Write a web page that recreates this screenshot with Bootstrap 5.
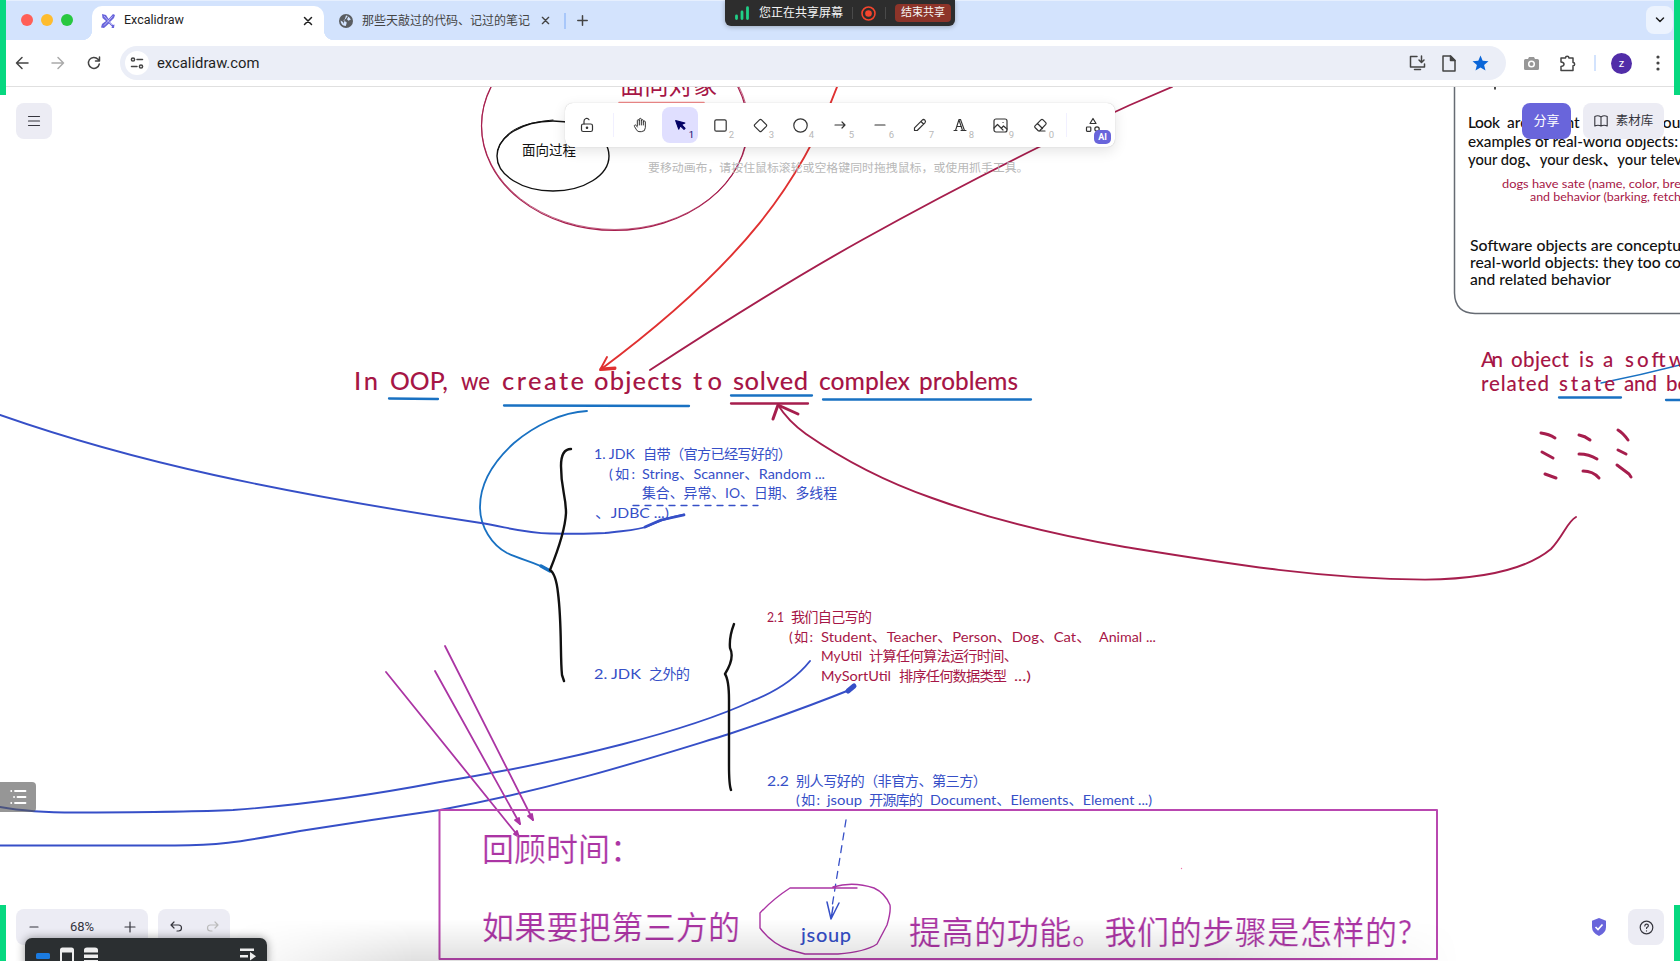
<!DOCTYPE html>
<html lang="zh-CN">
<head>
<meta charset="utf-8">
<meta name="viewport" content="width=device-width, initial-scale=1">
<title>Excalidraw</title>
<link href="https://cdn.jsdelivr.net/npm/bootstrap@5.3.0/dist/css/bootstrap.min.css" rel="stylesheet">
<style>
body{font-family:Roboto,"Noto Sans CJK SC",sans-serif;width:1680px;height:961px;color:#1f1f1f}
svg{display:block;flex:none}
.ic{fill:none;stroke:currentColor;stroke-width:1.5;stroke-linecap:round;stroke-linejoin:round}
.tabstrip{height:40px;background:#d3e3fd;border-top:1px solid #e6effe;padding:5px 7px 0 21px}
.light{width:12px;height:12px;border-radius:50%}
.tab-on{width:232px;height:34px;background:#fff;border-radius:10px 10px 0 0;margin-left:19px;padding:0 11px 5px 9px;font-size:12.5px}
.tab-on:before,.tab-on:after{content:"";position:absolute;bottom:0;width:10px;height:10px}
.tab-on:before{left:-10px;background:radial-gradient(circle at 0 0,#d3e3fd 10px,#fff 10.5px)}
.tab-on:after{right:-10px;background:radial-gradient(circle at 100% 0,#d3e3fd 10px,#fff 10.5px)}
.tab-off{height:29px;margin-left:15px;font-size:12px;color:#444}
.addressbar{height:47px;border-bottom:1px solid #e0e0e0;padding:0 20px 0 15px;color:#444}
.omni{height:34px;width:1386px;background:#ebeef7;border-radius:17px;margin-left:19px;padding:0 17px 0 5px}
.site{width:24px;height:24px;border-radius:50%;background:#fff}
.edge{width:6px;background:#07d880;z-index:20}
.share-pill{left:725px;top:0;width:230px;height:26px;background:#2d2d2d;border-radius:0 0 6px 6px;box-shadow:0 1px 5px #0004;color:#f4f4f4;font-size:12px;padding:0 4px 0 10px}
.stop{width:56px;height:18px;background:#8d3429;border-radius:4px;font-size:11px;line-height:18px}
.board{height:874px;overflow:hidden}
.soft{background:#ececf4;border-radius:8px;color:#35353d}
.toolbox{left:565px;top:16px;width:550px;height:44px;border-radius:8px;background:#fff;box-shadow:0 0 1px #0004,0 4px 14px #0000001c;color:#333;padding:0 4px}
.tool{width:36px;height:36px;border-radius:8px;margin-right:4px}
.tool small{position:absolute;right:4px;bottom:3px;font-size:9.5px;line-height:11px;color:#b8b8b8}
.tool.on{background:#e0dfff;color:#030064}.tool.on small{color:#030064}
.bar{width:1px;height:24px;background:#f1f0ff}
.ai{right:4px;bottom:3px;width:17px;height:14px;border-radius:5px;background:#6965db;color:#fff;font-size:9px;line-height:14px;font-weight:700}
.tip{left:648px;top:71px;width:386px;font-size:11.9px;line-height:20px;color:#b8b8b8;white-space:nowrap}
.topright{right:16px;top:16px;gap:12px;font-size:13px}
.share-btn{width:49px;height:36px;border-radius:8px;background:#6965db;color:#fff}
.lib{width:81px;height:36px;font-size:12.5px}
.dock{left:25px;top:851px;width:242px;height:30px;border-radius:7px 7px 0 0;background:#2b2f31;box-shadow:0 0 10px #0006;padding:9px 11px 0}
.side{left:0;top:695px;width:36px;height:30px;background:#585858a0;border-radius:0 4px 4px 0}
.dim{left:230px;right:220px;bottom:0;height:42px;background:linear-gradient(#0000,#0000001f);-webkit-mask-image:linear-gradient(90deg,#0000,#000 15%,#000 80%,#0000)}
.board text{font-family:Lato,"Noto Sans CJK SC",sans-serif;font-weight:400}
.cr{fill:#a61646}.bl{fill:#364fc7}.pu{fill:#ab35a4}
.scr{stroke:#a61e4d}.sbl{stroke:#364fc7}.spu{stroke:#ab35a4}.saz{stroke:#1971c2}.srd{stroke:#e03131}
.board .big text{font-size:32px;stroke:#fff;stroke-width:.2px}
.board .hand{font-size:14.2px}
.board .ink text,.board text.ink{font-weight:500}
</style>
</head>
<body class="position-relative overflow-hidden bg-white m-0">
<header>
 <div class="tabstrip d-flex align-items-start">
  <div class="d-flex gap-2 mt-2"><span class="light" style="background:#ff5f57"></span><span class="light" style="background:#febc2e"></span><span class="light" style="background:#28c840"></span></div>
  <div class="tab-on position-relative d-flex align-items-center">
   <svg width="14" height="14" viewBox="0 0 14 14" fill="#6965db"><path d="M1 0l4 1 2.600 4L12 0l2 1-1 3-4 4 3 3 1.500-.5L13 14h-2.500l.5-1.500-3-3L3 14 0 13.500 1 10l4-3L1.500 4z"/><path d="M3 2l8 9M11.500 2.500L3 11.500" stroke="#d9d8ff" stroke-width=".7"/></svg>
   <span class="flex-grow-1" style="margin-left:9px">Excalidraw</span>
   <svg class="ic" width="10" height="10" viewBox="0 0 10 10"><path d="M1.500 1.500l7 7m0-7l-7 7"/></svg>
  </div>
  <div class="tab-off d-flex align-items-center">
   <svg width="14" height="14" viewBox="0 0 14 14"><circle cx="7" cy="7" r="7" fill="#5a5d61"/><path d="M7 1.600c2 .2 2 1 .7 2-.6.500-.4 1.600-1.700 1.600S4 7 5.300 7.200s2.700.4 2.300 2L6.800 12C3.300 12 1.600 9 1.700 6.500L4 8l.3 2M9.500 2.500l2.400 3-2.500 1.300-1.400-1.600z" fill="#d3e3fd"/></svg>
   <span style="margin:0 11px 0 9px">那些天敲过的代码、记过的笔记</span>
   <svg class="ic" width="9" height="9" viewBox="0 0 10 10"><path d="M1.500 1.500l7 7m0-7l-7 7"/></svg>
   <span style="width:2px;height:16px;background:#a8c7fa;margin:0 11px 0 14px"></span>
   <svg class="ic" width="11" height="11" viewBox="0 0 11 11"><path d="M.8 5.500h9.400M5.500.8v9.400"/></svg>
  </div>
  <div class="ms-auto d-flex align-items-center justify-content-center" style="width:27px;height:28px;border-radius:8px;background:#ecf3fe"><svg class="ic" width="10" height="8" viewBox="0 0 10 8"><path d="M1.500 2L5 5.500 8.500 2"/></svg></div>
 </div>
 <div class="addressbar d-flex align-items-center">
  <svg class="ic" width="14" height="14" viewBox="0 0 14 14"><path d="M13 7H1.500M7 1.500L1.500 7 7 12.500"/></svg>
  <svg class="ic" style="margin-left:22px;color:#aaa" width="14" height="14" viewBox="0 0 14 14"><path d="M1 7h11.500M7 1.500L12.500 7 7 12.500"/></svg>
  <svg class="ic" style="margin-left:22px" width="14" height="14" viewBox="0 0 14 14"><path d="M12.300 8A5.500 5.500 0 1 1 11 3.200L12.500 5M12.500 1v4h-4"/></svg>
  <div class="omni d-flex align-items-center">
   <span class="site d-flex align-items-center justify-content-center"><svg class="ic" width="14" height="14" viewBox="0 0 14 14"><circle cx="3" cy="3.500" r="1.600"/><path d="M7 3.500h5.500M1.500 10.500H7"/><circle cx="11" cy="10.500" r="1.600"/></svg></span>
   <span class="ms-2 me-auto" style="font-size:14.8px;color:#1f1f1f">excalidraw.com</span>
   <div class="d-flex align-items-center" style="gap:16px">
    <svg class="ic" width="17" height="16" viewBox="0 0 17 16"><path d="M8 1.500H1.500V12h14V9M5.500 14.500h6M12.500 1v6M10 5l2.500 2.500L15 5"/></svg>
    <svg class="ic" width="14" height="17" viewBox="0 0 14 17"><path d="M1 1h7.500L13 5.500V16H1z"/><path d="M8.500 1v4.500H13z" fill="currentColor"/></svg>
    <svg width="17" height="16" viewBox="0 0 17 16" fill="#0b66d8"><path d="M8.500.5l2.200 5.300 5.800.4-4.400 3.700 1.400 5.600-5-3-5 3 1.400-5.600L.5 6.200l5.800-.4z"/></svg>
   </div>
  </div>
  <svg style="margin-left:18px" width="15" height="13" viewBox="0 0 15 13"><path d="M5 0h5l1 2h2.500Q15 2 15 3.500v8q0 1.500-1.500 1.500h-12Q0 13 0 11.500v-8Q0 2 1.500 2H4z" fill="#979797"/><circle cx="7.500" cy="7" r="2.800" fill="none" stroke="#fff" stroke-width="1.500"/></svg>
  <svg class="ic" style="margin-left:20px" width="18" height="17" viewBox="0 0 18 17"><path d="M2 3h4.500a1.700 1.700 0 0 1 3.400 0H14v4.500a1.600 1.600 0 0 1 0 3.300V15.500H2v-4q3-.5 3-2.300T2 7z"/></svg>
  <span style="width:2px;height:16px;background:#d3e3fd;margin:0 15px 0 17px"></span>
  <span class="rounded-circle text-white text-center" style="width:21px;height:21px;background:#512da8;font-size:11px;line-height:21px">z</span>
  <svg class="ms-auto" width="4" height="16" viewBox="0 0 4 16" fill="#444"><circle cx="2" cy="2" r="1.600"/><circle cx="2" cy="8" r="1.600"/><circle cx="2" cy="14" r="1.600"/></svg>
 </div>
</header>

<main class="board position-relative">
<svg width="1680" height="874" viewBox="0 87 1680 874" fill="none" stroke-linecap="round" stroke-linejoin="round">
 <g stroke-width="1.200" class="scr">
  <ellipse cx="614.500" cy="126" rx="133" ry="104.500"/><ellipse cx="615" cy="125" rx="133.500" ry="104.500" stroke-width=".7"/>
 </g>
 <ellipse cx="553" cy="156" rx="56" ry="35" stroke="#111" stroke-width="1.400"/>
 <path d="M498 150C505 125 535 122 553 120" stroke="#111"/>
 <path d="M619 102.500h85" stroke="#f28b8b" stroke-width="1.500"/>
 <g class="srd" stroke-width="1.900"><path d="M837 87C802 180 745 262 600 370M607 357l-7 13 15-1"/><path d="M601 369l14-1" stroke-width="3"/></g>
 <path d="M1172 87L1130 105 1039 147Q950 191 862 240T650 370" class="scr" stroke-width="1.900"/>
 <g class="saz" stroke-width="2.300"><path d="M389 398.500l49 .5M504 405.500l185 .5M731 395.500h81M823 399.500h208"/>
  <path d="M587 411C562 412 534 426 514 443C492 463 480 485 480 507C480 527 492 545 507 553C522 560 535 562 551 571" stroke-width="1.800"/><path d="M541 566l9 5" stroke-width="3.500"/></g>
 <g class="scr" stroke-width="2.300"><path d="M731 403.500h77"/><path d="M773 419l5-14 20 9" stroke-width="3"/>
 <path d="M778 405Q788 421 806 434C845 461 886 482 932 498C990 519 1055 535 1125 547C1230 564 1320 579 1425 579.600C1485 579 1528 568 1551 549C1564 535 1567 522 1576 517" stroke-width="1.900"/></g>
 <g class="sbl" stroke-width="1.900">
  <path d="M0 415Q100 450 214 475T481 523C510 528 525 533 550 533.500C575 534 590 534 605 533C630 530 640 530 648 526Q662 519 684 514.500"/><path d="M645 527l16-7 23-5" stroke-width="2.800"/>
  <path d="M633 505.500h125" stroke-width="1.300" stroke-dasharray="6 6"/>
  <path d="M810 661Q790 686 752 701C690 730 570 761 440 782Q330 803 233 810Q190 812 83 812.500Q33 813 0 807"/>
  <path d="M852 689Q800 710 729 734C660 755 560 788 440 810Q370 820 300 831C235 843 215 845.500 175 845.500H0"/><path d="M848 691l6-5" stroke-width="5"/>
  <path d="M846 820l-14 87" stroke-width="1.300" stroke-dasharray="7 6"/><path d="M827 902l4 17 8-16M831 919l2-12" stroke-width="1.500"/>
 </g>
 <g stroke="#111" stroke-width="2.400"><path d="M571 449Q561 449 561 466C561 490 566 495 566 513Q565 533 550 570Q556 574 558 593C562 625 560 655 562 675L564 681"/><path d="M734 624Q729 637 730 648Q735 658 725 674Q729 680 729 700V765Q729 785 731 790"/></g>
 <g class="spu" stroke-width="1.800"><path d="M386 672l133 165M435 671l85 153M445 646l88 174"/><g fill="#ab35a4"><path d="M519 837l-5-3 3-3zM520 824l-5-4 4-2zM533 820l-5-4 4-2z"/></g></g>
 <path class="spu" stroke-width="1.400" d="M857 888H790Q773 899 760 913V928Q772 944 790 950L805 954H838Q865 952 877 944L887 925Q891 912 890 905Q885 893 874 888Q853 881 833 887"/>
 <path d="M1454.500 87V293Q1455 313 1475 313.500H1680" stroke="#666b73" stroke-width="1.500"/>
 <path d="M1495 86v3" stroke="#111" stroke-width="1.500"/>
 <path class="saz" d="M1559 397.500h62M1666 400h14" stroke-width="2.300"/><path class="saz" d="M1601 383q40-8 79-18" stroke-width="1.300"/>
 <g class="scr" stroke-width="3"><path d="M1541 433q8 1 14 5M1579 435q6 1 11 5M1618 430q5 3 10 10M1542 452l11 6M1579 454q10 0 18 5M1618 450l8 4M1545 474l11 4M1583 471q10 0 16 7M1617 465l12 9 2 3"/></g>
 <circle cx="1181.500" cy="868.500" r=".7" fill="#e7a"/>

 <text x="620" y="94" class="cr" font-size="24.300">面向对象</text>
 <text x="522" y="155" fill="#111" font-size="13.500">面向过程</text>
 <text y="390" class="cr ink" font-size="25.500"><tspan x="354" textLength="24">In</tspan> <tspan x="390" textLength="58" lengthAdjust="spacingAndGlyphs">OOP,</tspan> <tspan x="461" textLength="29" lengthAdjust="spacingAndGlyphs">we</tspan> <tspan x="502" textLength="82">create</tspan> <tspan x="594" textLength="88">objects</tspan> <tspan x="693" textLength="29">to</tspan> <tspan x="733" textLength="75">solved</tspan> <tspan x="819" textLength="91" lengthAdjust="spacingAndGlyphs">complex</tspan> <tspan x="919" textLength="99" lengthAdjust="spacingAndGlyphs">problems</tspan></text>
 <g class="bl hand">
  <text y="459"><tspan x="594" textLength="41" lengthAdjust="spacingAndGlyphs">1. JDK</tspan><tspan x="643" textLength="149">自带（官方已经写好的）</tspan></text>
  <text y="479"><tspan x="609" textLength="26">(如:</tspan><tspan x="642" textLength="183" lengthAdjust="spacingAndGlyphs">String、Scanner、Random ...</tspan></text>
  <text y="498" x="642" textLength="195" lengthAdjust="spacingAndGlyphs">集合、异常、IO、日期、多线程</text>
  <text y="517.500" x="595" textLength="74" lengthAdjust="spacingAndGlyphs">、JDBC ...)</text>
  <text y="678.500"><tspan x="594" textLength="47" lengthAdjust="spacingAndGlyphs">2. JDK</tspan><tspan x="649" textLength="41">之外的</tspan></text>
  <text y="785.500"><tspan x="767" textLength="22" lengthAdjust="spacingAndGlyphs">2.2</tspan><tspan x="796" textLength="191">别人写好的（非官方、第三方）</tspan></text>
  <text y="805"><tspan x="796" textLength="24">(如:</tspan><tspan x="827" textLength="35" lengthAdjust="spacingAndGlyphs">jsoup</tspan><tspan x="869" textLength="54">开源库的</tspan><tspan x="930" textLength="222" lengthAdjust="spacingAndGlyphs">Document、Elements、Element ...)</tspan></text>
 </g>
 <g class="cr hand">
  <text y="622"><tspan x="767" textLength="17" lengthAdjust="spacingAndGlyphs">2.1</tspan><tspan x="791" textLength="81">我们自己写的</tspan></text>
  <text y="642"><tspan x="789" textLength="24">(如:</tspan><tspan x="821" textLength="270" lengthAdjust="spacingAndGlyphs">Student、Teacher、Person、Dog、Cat、</tspan><tspan x="1099" textLength="57" lengthAdjust="spacingAndGlyphs">Animal ...</tspan></text>
  <text y="661"><tspan x="821" textLength="41" lengthAdjust="spacingAndGlyphs">MyUtil</tspan><tspan x="869" textLength="149">计算任何算法运行时间、</tspan></text>
  <text y="680.500"><tspan x="821" textLength="70" lengthAdjust="spacingAndGlyphs">MySortUtil</tspan><tspan x="899" textLength="108">排序任何数据类型</tspan><tspan x="1014" textLength="17" lengthAdjust="spacingAndGlyphs">...)</tspan></text>
 </g>
 <g class="pu big"><text x="482" y="861" textLength="160">回顾时间：</text><text x="482" y="938.500" textLength="258">如果要把第三方的</text><text x="909" y="944" textLength="503">提高的功能。我们的步骤是怎样的?</text></g>
 <rect x="439.500" y="810" width="997.500" height="149" stroke="#b948b0" stroke-width="2"/>
 <text x="801" y="942" class="bl ink" font-size="20" textLength="50">jsoup</text>
 <g fill="#111" font-size="15.500" class="ink">
  <text y="128"><tspan x="1468" textLength="32">Look</tspan> <tspan x="1507">around</tspan> <tspan x="1548">right</tspan> <tspan x="1595" textLength="40">now</tspan> <tspan x="1655">you'll</tspan></text>
  <text x="1468" y="147" textLength="210" lengthAdjust="spacingAndGlyphs">examples of real-world objects:</text>
  <text x="1468" y="165" textLength="214" lengthAdjust="spacingAndGlyphs">your dog、your desk、your telev</text>
  <text x="1470" y="251" textLength="211" lengthAdjust="spacingAndGlyphs">Software objects are conceptu</text>
  <text x="1470" y="268" textLength="211" lengthAdjust="spacingAndGlyphs">real-world objects: they too co</text>
  <text x="1470" y="285" textLength="141" lengthAdjust="spacingAndGlyphs">and related behavior</text>
 </g>
 <g class="cr" font-size="11.500"><text x="1502" y="187.500" textLength="179" lengthAdjust="spacingAndGlyphs">dogs have sate (name, color, bre</text><text x="1530" y="201" textLength="151" lengthAdjust="spacingAndGlyphs">and behavior (barking, fetch</text></g>
 <g class="cr ink" font-size="20.500">
  <text y="366.500"><tspan x="1481" textLength="22">An</tspan> <tspan x="1511" textLength="58">object</tspan> <tspan x="1579" textLength="15">is</tspan> <tspan x="1603">a</tspan> <tspan x="1625" textLength="60">softw</tspan></text>
  <text y="390.500"><tspan x="1481" textLength="68">related</tspan> <tspan x="1559" textLength="56">state</tspan> <tspan x="1624" textLength="33">and</tspan> <tspan x="1666">be</tspan></text>
 </g>
</svg>

<div class="dim position-absolute"></div>
<div class="soft position-absolute d-flex align-items-center justify-content-center" style="left:16px;top:16px;width:36px;height:36px"><svg class="ic" width="14" height="12" viewBox="0 0 14 12" style="stroke-width:1.2"><path d="M1.500 1.500h11M1.500 6h11M1.500 10.500h11"/></svg></div>

<div class="toolbox position-absolute d-flex align-items-center">
 <div class="tool d-flex align-items-center justify-content-center"><svg class="ic" width="16" height="16" viewBox="0 0 16 16" style="stroke-width:1.200"><rect x="2.500" y="7" width="11" height="7.500" rx="1.800"/><circle cx="8" cy="10.700" r=".7" fill="currentColor"/><path d="M5 7V4.200a2.700 2.700 0 0 1 5-1.500"/></svg></div>
 <span class="bar" style="margin:0 8px 0 4px"></span>
 <div class="tool position-relative d-flex align-items-center justify-content-center"><svg class="ic" width="16" height="16" viewBox="0 0 24 24"><path d="M8 13V5.500a1.500 1.500 0 0 1 3 0V12M11 5.500v-2a1.500 1.500 0 1 1 3 0V12M14 5.500a1.500 1.500 0 0 1 3 0V12M17 7.500a1.500 1.500 0 0 1 3 0V16a6 6 0 0 1-6 6h-2c-2 0-4-.5-5.200-2.700L3.600 14a1.500 1.500 0 0 1 2.500-1.600L8 15"/></svg></div>
 <div class="tool on position-relative d-flex align-items-center justify-content-center"><svg class="ic" width="16" height="16" viewBox="0 0 22 22"><path d="M6 6l4.200 11.700 2.300-4.600L17.500 18l1.500-1.500-4.900-5 4.600-2.300L6 6z" transform="translate(-1 -1)" fill="currentColor"/></svg><small>1</small></div>
 <div class="tool position-relative d-flex align-items-center justify-content-center"><svg class="ic" width="15" height="15" viewBox="0 0 15 15" style="stroke-width:1.200"><rect x="1.800" y="1.800" width="11.400" height="11.400" rx="1.500"/></svg><small>2</small></div>
 <div class="tool position-relative d-flex align-items-center justify-content-center"><svg class="ic" width="15" height="15" viewBox="0 0 15 15" style="stroke-width:1.200"><path d="M6.700 1.700Q7.500 1 8.300 1.700l5 5q.7.800 0 1.600l-5 5q-.8.700-1.600 0l-5-5q-.7-.8 0-1.600z"/></svg><small>3</small></div>
 <div class="tool position-relative d-flex align-items-center justify-content-center"><svg class="ic" width="15" height="15" viewBox="0 0 15 15" style="stroke-width:1.200"><circle cx="7.500" cy="7.500" r="6.700"/></svg><small>4</small></div>
 <div class="tool position-relative d-flex align-items-center justify-content-center"><svg class="ic" width="14" height="14" viewBox="0 0 14 14" style="stroke-width:1.200"><path d="M2 7h10M9 4l3 3-3 3"/></svg><small>5</small></div>
 <div class="tool position-relative d-flex align-items-center justify-content-center"><svg class="ic" width="14" height="14" viewBox="0 0 14 14" style="stroke-width:1.200"><path d="M2 7h10"/></svg><small>6</small></div>
 <div class="tool position-relative d-flex align-items-center justify-content-center"><svg class="ic" width="14" height="14" viewBox="0 0 14 14" style="stroke-width:1.200"><path d="M1.500 12.500v-2.700l7.700-7.700q1.300-1.200 2.700 0 1.200 1.300 0 2.700l-7.700 7.700zM8 3.500L10.500 6"/></svg><small>7</small></div>
 <div class="tool position-relative d-flex align-items-center justify-content-center"><svg class="ic" width="16" height="16" viewBox="0 0 16 16" style="stroke-width:1.100"><path d="M2 13.500h3M9 13.500h5M3.500 13.500L7 2.500h1.500l4 11M5 9.500h4.500M7 3l3.500 10.500"/></svg><small>8</small></div>
 <div class="tool position-relative d-flex align-items-center justify-content-center"><svg class="ic" width="15" height="15" viewBox="0 0 15 15" style="stroke-width:1.200"><rect x="1" y="1" width="13" height="13" rx="2"/><path d="M1 10l3.500-3.500L10 12M8.500 10l2-2L14 11M10 4.500h.1"/></svg><small>9</small></div>
 <div class="tool position-relative d-flex align-items-center justify-content-center"><svg class="ic" width="15" height="15" viewBox="0 0 15 15" style="stroke-width:1.200"><path d="M12 13H5.500L2 9.500q-.7-.8 0-1.600L8.200 1.700q.8-.7 1.600 0l3 3q.7.800 0 1.600L6.500 13M4.500 5.500l5 5"/></svg><small>0</small></div>
 <span class="bar" style="margin:0 8px 0 4px"></span>
 <div class="tool m-0 d-flex align-items-center justify-content-center"><svg class="ic" width="16" height="16" viewBox="0 0 16 16" style="stroke-width:1.200"><path d="M8 1.500L11 6.500H5z"/><rect x="1.500" y="10" width="4.300" height="4.300" rx=".7"/><circle cx="12" cy="12" r="2.200"/></svg></div>
 <span class="ai position-absolute text-center">AI</span>
</div>
<div class="tip position-absolute">要移动画布，请按住鼠标滚轮或空格键同时拖拽鼠标，或使用抓手工具。</div>

<div class="topright position-absolute d-flex">
 <div class="share-btn d-flex align-items-center justify-content-center">分享</div>
 <div class="soft lib d-flex align-items-center justify-content-center gap-2"><svg class="ic" width="14" height="14" viewBox="0 0 14 14" style="stroke-width:1.100"><path d="M7 3Q4 .8 .8 2.500v9.500Q4 10.500 7 12q3-1.500 6.200 0V2.500Q10 .8 7 3zV12"/></svg>素材库</div>
</div>
<div class="side position-absolute"><svg class="ic text-white" width="36" height="30" viewBox="0 0 36 30" style="stroke-width:1.800"><path d="M15 9h10.500M17.500 15h8M15 21h10.500M11.200 9h.1M14 15h.1M11.200 21h.1"/></svg></div>

<div class="position-absolute d-flex" style="left:16px;top:822px;gap:10px">
 <div class="soft d-flex align-items-center justify-content-between" style="width:132px;height:36px;padding:0 12px;font-size:13px"><svg class="ic" width="12" height="12" viewBox="0 0 12 12" style="stroke-width:1.200"><path d="M2 6h8"/></svg><span>68%</span><svg class="ic" width="12" height="12" viewBox="0 0 12 12" style="stroke-width:1.200"><path d="M1 6h10M6 1v10"/></svg></div>
 <div class="soft d-flex align-items-center justify-content-around" style="width:72px;height:36px"><svg class="ic" width="13" height="12" viewBox="0 0 13 12" style="stroke-width:1.200"><path d="M4 1L1 4l3 3M1 4h7.500a3 3 0 0 1 0 6H7"/></svg><svg class="ic" width="13" height="12" viewBox="0 0 13 12" style="stroke-width:1.200;color:#bbb"><path d="M9 1l3 3-3 3M12 4H4.500a3 3 0 0 0 0 6H6"/></svg></div>
</div>
<div class="dock position-absolute d-flex align-items-start">
 <svg width="64" height="16" viewBox="0 0 64 16"><rect y="6" width="14" height="6" rx="1.500" fill="#1b7be0"/><path d="M24 16V3q0-2.500 2.500-2.500h9Q38 .5 38 3v13h-2V5.500H26V16z" fill="#eee"/><path d="M48 5.500V3q0-2.500 3-2.500h8q3 0 3 2.500v2.500zM48 7.500h14V11H48zM48 13h14v3H48z" fill="#eee"/></svg>
 <svg class="ms-auto" width="16" height="14" viewBox="0 0 16 14" fill="#eee"><path d="M0 1.500h14v2.500H0zM0 8h8v2.500H0zM10 5l6 4.200-6 4.300z"/></svg>
</div>
<div class="position-absolute d-flex align-items-center" style="right:16px;top:822px;gap:21px">
 <svg width="16" height="18" viewBox="0 0 16 18"><path d="M8 0l7 2.700V9q0 6-7 9-7-3-7-9V2.700z" fill="#6965db"/><path d="M4.500 9l2.500 2.500 4.500-5" fill="none" stroke="#fff" stroke-width="1.700"/></svg>
 <div class="soft d-flex align-items-center justify-content-center" style="width:36px;height:36px"><svg class="ic" width="15" height="15" viewBox="0 0 15 15" style="stroke-width:1.200"><circle cx="7.500" cy="7.500" r="6.300"/><path d="M5.800 6q.1-1.800 1.800-1.800 1.800 0 1.800 1.600 0 1-1.800 2v.7M7.500 10.800v.1"/></svg></div>
</div>
</main>

<div class="share-pill position-absolute d-flex align-items-center">
 <svg width="14" height="14" viewBox="0 0 14 14" stroke="#20cf87" stroke-width="2.800" stroke-linecap="round"><path d="M1.500 10v2.500M7 6v6.500M12.500 1.700v10.800"/></svg>
 <span style="margin-left:10px">您正在共享屏幕</span>
 <span style="width:1px;height:12px;background:#4a4a4a;margin:0 auto"></span>
 <svg width="15" height="15" viewBox="0 0 15 15"><circle cx="7.500" cy="7.500" r="6.500" fill="none" stroke="#f5452d" stroke-width="1.600"/><circle cx="7.500" cy="7.500" r="3.300" fill="#f5452d"/></svg>
 <span style="width:1px;height:12px;background:#4a4a4a;margin:0 auto"></span>
 <span class="stop text-center">结束共享</span>
</div>
<span class="edge position-absolute top-0 start-0" style="height:95px"></span><span class="edge position-absolute top-0 end-0" style="height:95px"></span>
<span class="edge position-absolute start-0" style="top:905px;height:56px"></span><span class="edge position-absolute end-0" style="top:905px;height:56px"></span>
<script src="https://cdn.jsdelivr.net/npm/bootstrap@5.3.0/dist/js/bootstrap.bundle.min.js"></script>
</body>
</html>
